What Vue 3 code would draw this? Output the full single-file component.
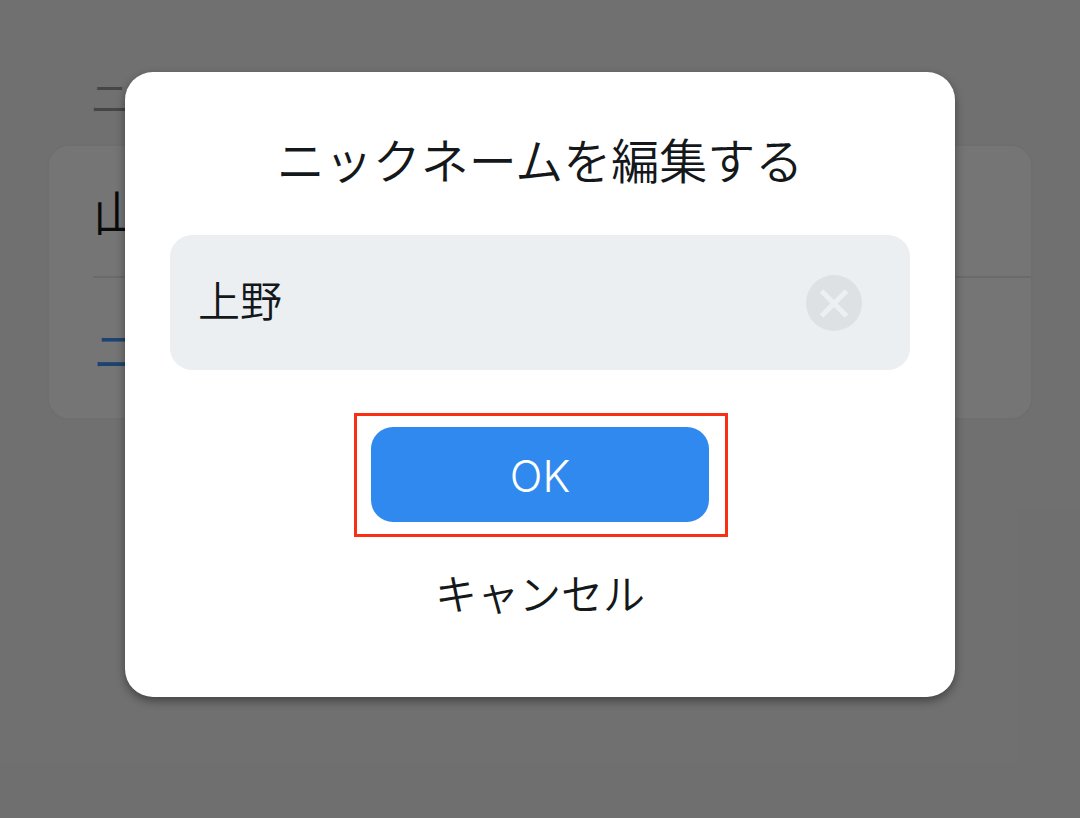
<script setup>
import { ref } from 'vue'

const nickname = ref('上野')
const input = ref(null)

function clear() {
  nickname.value = ''
  input.value?.focus()
}
</script>

<template>
  <div class="screen">
    <main class="page">
      <h2 class="section-label">ニ</h2>
      <section class="card">
        <div class="row name">山</div>
        <a class="row edit" href="#">ニ</a>
      </section>
    </main>

    <div class="overlay">
      <form class="dialog" role="dialog" aria-labelledby="dialog-title" @submit.prevent>
        <h1 id="dialog-title" class="title">ニックネームを編集する</h1>
        <div class="field">
          <input ref="input" v-model="nickname" class="input" type="text" aria-labelledby="dialog-title" />
          <button class="clear" type="button" aria-label="クリア" @click="clear">
            <svg viewBox="0 0 56 56" aria-hidden="true">
              <circle cx="28" cy="28" r="28" fill="#dde1e4" />
              <path d="M15.500 16 L40.500 41 M40.500 16 L15.500 41" stroke="#edf0f3" stroke-width="5" fill="none" />
            </svg>
          </button>
        </div>
        <div class="confirm">
          <button class="ok" type="submit">OK</button>
        </div>
        <button class="cancel" type="button">キャンセル</button>
      </form>
    </div>
  </div>
</template>

<style>
body {
  margin: 0;
  background: #f3f3f3;
}
</style>

<style scoped>
.screen {
  position: relative;
  min-height: 100vh;
  box-sizing: border-box;
  overflow: hidden;
  color: #14181a;
  background: #f3f3f3;
  font-family: "Noto Sans CJK JP", sans-serif;
  font-weight: 350;
}

.page {
  padding: 68px 47px 0;
}

.section-label {
  margin: 0;
  padding: 0 43px;
  color: #999;
  font-size: 40px;
  font-weight: 350;
  line-height: 56px;
}

.card {
  margin-top: 20px;
  padding-left: 44px;
  border: 2px solid #eef0f0;
  border-radius: 22px;
  background: #fff;
}

.row {
  display: block;
  height: 130px;
  font-size: 48px;
  line-height: 128px;
  text-decoration: none;
}

.name {
  border-bottom: 2px solid #e8eaea;
}

.edit {
  height: 140px;
  line-height: 140px;
  color: #3e94f4;
}

.overlay {
  position: absolute;
  inset: 0;
  padding: 72px 125px;
  background: rgba(0, 0, 0, 0.54);
}

.dialog {
  display: flex;
  flex-direction: column;
  align-items: center;
  padding: 50px 45px 73px;
  border-radius: 28px;
  background: #fff;
  box-shadow: 0 4px 10px rgba(0, 0, 0, 0.4);
}

.title {
  margin: 0;
  font-size: 48px;
  font-weight: 350;
  line-height: 72px;
  white-space: nowrap;
}

.field {
  display: flex;
  align-items: center;
  align-self: stretch;
  box-sizing: border-box;
  height: 135px;
  margin-top: 41px;
  padding: 0 48px 0 28px;
  border-radius: 22px;
  background: #ebeff2;
}

button,
input {
  padding: 0;
  border: 0;
  background: none;
  color: inherit;
  font: inherit;
}

.input {
  flex: 1;
  min-width: 0;
  height: 64px;
  padding-bottom: 8px;
  outline: 0;
  font-size: 42px;
}

.clear {
  width: 56px;
  height: 56px;
}

.clear svg {
  display: block;
}

.confirm {
  position: relative;
  margin-top: 57px;
}

.confirm::after {
  content: "";
  position: absolute;
  inset: -14px -19px -15px -17px;
  border: 3px solid #f92f14;
  pointer-events: none;
}

.ok {
  display: block;
  width: 338px;
  height: 95px;
  padding-top: 2px;
  border-radius: 22px;
  background: #2f89ef;
  color: #fff;
  font-family: Inter, "Noto Sans CJK JP", sans-serif;
  font-size: 43px;
  font-weight: 300;
}

.cancel {
  margin-top: 38px;
  font-size: 42px;
  line-height: 64px;
}
</style>
